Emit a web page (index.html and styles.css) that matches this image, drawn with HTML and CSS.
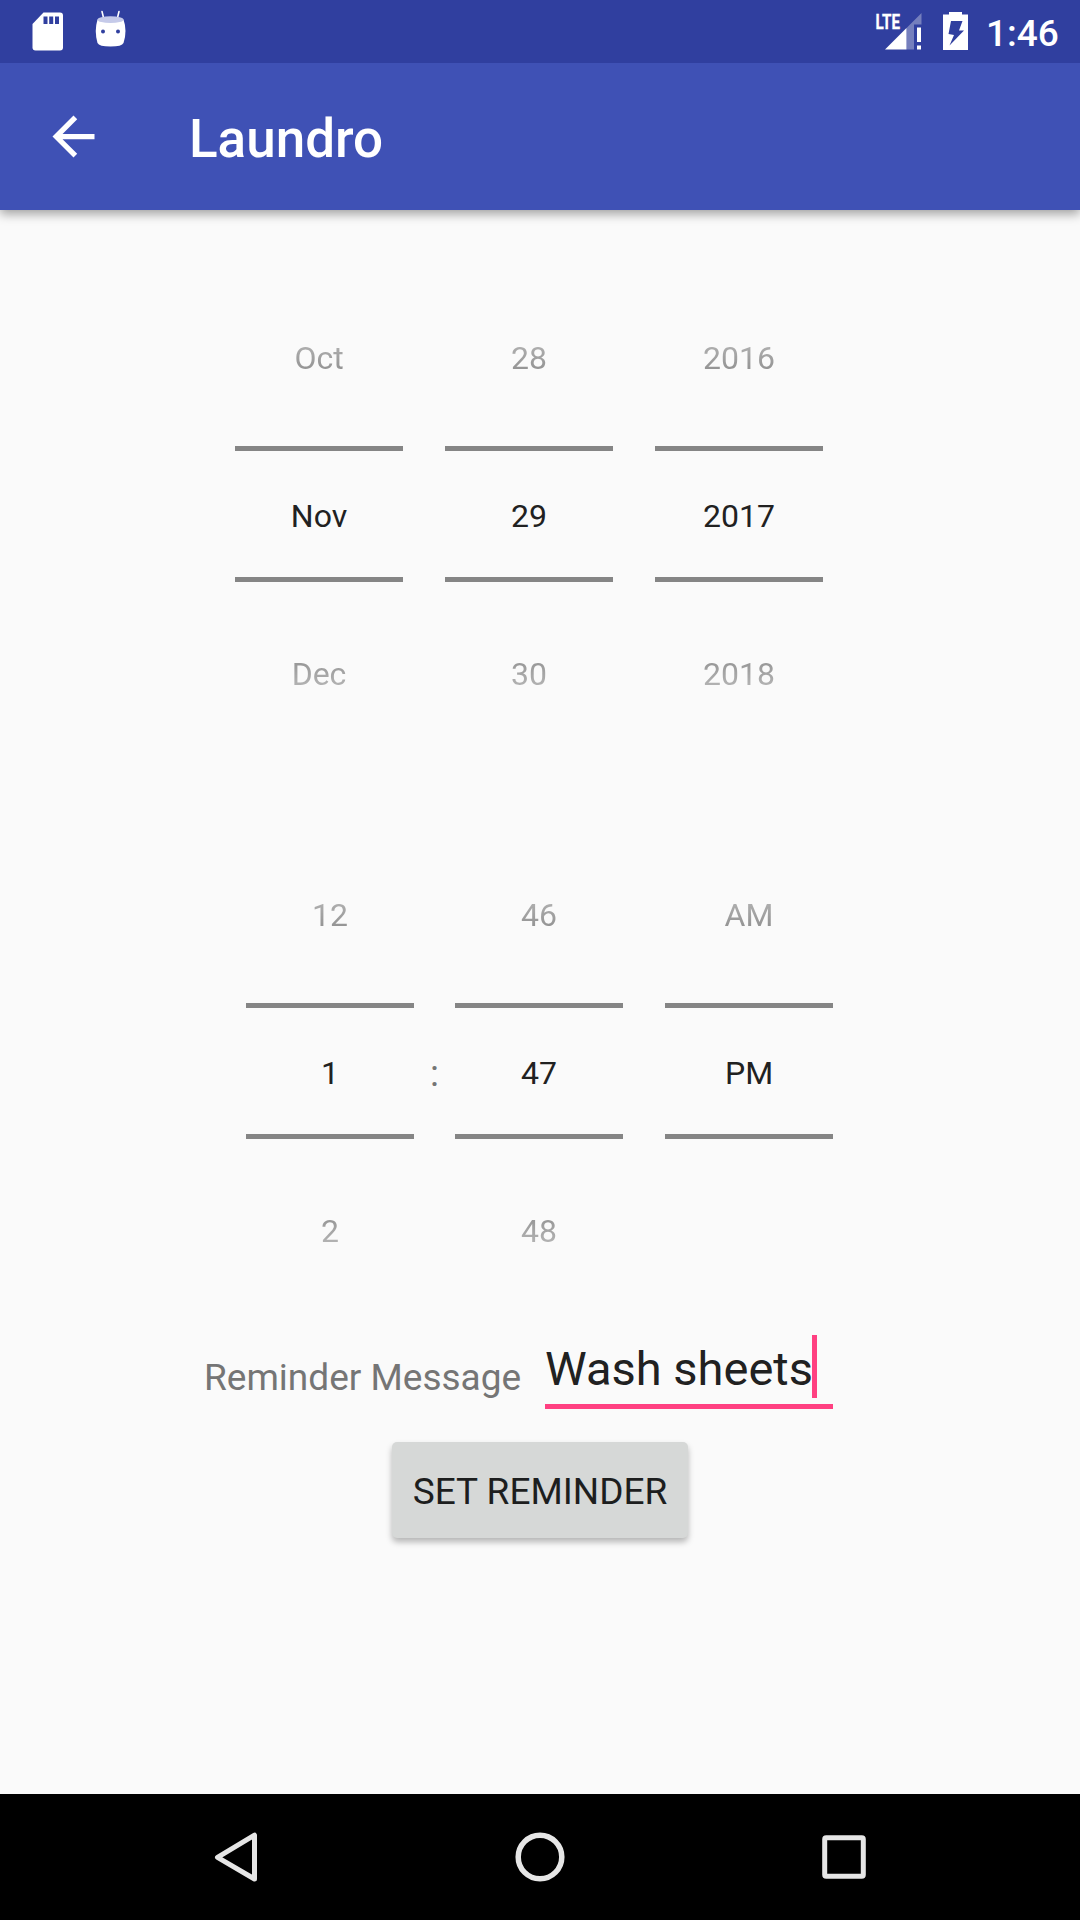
FILE: index.html
```html
<!DOCTYPE html>
<html lang="en">
<head>
<meta charset="utf-8">
<title>Laundro</title>
<link rel="stylesheet" href="styles.css">
</head>
<body>
<div class="screen">
  <div class="status">
    <svg class="status-left" width="140" height="63" viewBox="0 0 140 63">
      <path fill="#fff" d="M43.500 12.500H60Q63 12.500 63 15.500V47.500Q63 50.500 60 50.500H35.500Q32.500 50.500 32.500 47.500V24Z"/>
      <path fill="#303f9f" d="M43.500 16.500h4v7.500h-4zM49.200 16.500h4v7.500h-4zM55 16.500h4v7.500h-4z"/>
      <path d="M102 11.500l1.700 7M119 11.500l-1.700 7" stroke="#fff" stroke-width="1.600" stroke-linecap="round"/>
      <path fill="#fff" d="M97.500 19.500Q94 31 97.500 43Q99 46.500 110.500 46.500T123.500 43Q127.500 31 123.500 19.500Z"/>
      <ellipse cx="110.500" cy="19.700" rx="13" ry="3.400" fill="#c5cae9"/>
      <circle cx="103" cy="31.500" r="2" fill="#303f9f"/>
      <circle cx="118" cy="31.500" r="2" fill="#303f9f"/>
    </svg>
    <div class="status-right">
      <svg width="100" height="63" viewBox="870 0 100 63">
        <path fill="#757fbd" d="M921.500 13V24.500H914V49.500H906.500V28Z"/>
        <path fill="#fff" d="M906.500 28V49.500H885ZM917 27.500h4v14.500h-4zM917 45.500h4v4h-4z"/>
        <text class="lte" x="875.500" y="29" textLength="24.500" lengthAdjust="spacingAndGlyphs">LTE</text>
        <path fill="#fff" d="M943 14.500H949V12H962V14.500H968V50H943Z"/>
        <path fill="#303f9f" d="M951 21H962.500L959 30.500H964L949.500 45.500L954 35L948.500 34Z"/>
      </svg>
      <span class="clock">1:46</span>
    </div>
  </div>
  <div class="appbar">
    <svg width="63" height="63" viewBox="0 0 24 24"><path fill="#fff" d="M20 11H7.830l5.590-5.590L12 4l-8 8 8 8 1.410-1.410L7.830 13H20v-2z"/></svg>
    <h1 class="title">Laundro</h1>
  </div>
  <div class="content">
    <div class="picker date">
      <div class="col"><div class="prev">Oct</div><div class="current">Nov</div><div class="next">Dec</div></div>
      <div class="col"><div class="prev">28</div><div class="current">29</div><div class="next">30</div></div>
      <div class="col"><div class="prev">2016</div><div class="current">2017</div><div class="next">2018</div></div>
    </div>
    <div class="picker time">
      <div class="col"><div class="prev">12</div><div class="current">1</div><div class="next">2</div></div>
      <div class="colon">:</div>
      <div class="col"><div class="prev">46</div><div class="current">47</div><div class="next">48</div></div>
      <div class="col period"><div class="prev">AM</div><div class="current">PM</div><div class="next"></div></div>
    </div>
    <div class="message">
      <span class="label">Reminder Message</span>
      <div class="field"><span class="value">Wash sheets</span><span class="caret"></span></div>
    </div>
    <button class="submit">SET REMINDER</button>
  </div>
  <div class="nav">
    <svg width="1080" height="126" viewBox="0 0 1080 126" fill="none" stroke="#e6e6e6" stroke-linejoin="round">
      <path stroke-width="5" d="M217.500 63.300L254.500 41.200V85Z"/>
      <circle cx="540" cy="63" r="21.800" stroke-width="5.500"/>
      <rect x="824.700" y="43.700" width="38.600" height="38.600" rx="1.500" stroke-width="5"/>
    </svg>
  </div>
</div>
</body>
</html>
```
FILE: styles.css
```css
* { box-sizing: border-box; }
body { margin: 0; font-family: Roboto, sans-serif; }
.screen {
  width: 1080px;
  height: 1920px;
  display: flex;
  flex-direction: column;
  background: #fafafa;
  overflow: hidden;
}
.status {
  position: relative;
  z-index: 1;
  height: 63px;
  flex: none;
  display: flex;
  justify-content: space-between;
  background: #303f9f;
}
.status svg { display: block; }
.status-right { display: flex; width: 210px; }
.lte { font: 700 21px Roboto, sans-serif; fill: #fff; stroke: #fff; stroke-width: .3px; }
.clock {
  margin-left: 16px;
  color: #fff;
  font-size: 37px;
  font-weight: 500;
  line-height: 67px;
}
.appbar {
  height: 147px;
  flex: none;
  display: flex;
  align-items: center;
  padding-left: 42px;
  background: #3f51b5;
  box-shadow: 0 4px 10px rgba(0, 0, 0, .36);
}
.title {
  margin: 5px 0 0 84px;
  color: #fff;
  font-size: 53px;
  font-weight: 500;
  line-height: 62px;
}
.content {
  flex: 1;
  display: flex;
  flex-direction: column;
  align-items: flex-start;
  padding-top: 78px;
}
.picker {
  display: flex;
  font-size: 32px;
  color: #212121;
  text-align: center;
}
.date { gap: 42px; margin-left: 235px; }
.time { margin: 105px 0 0 246px; }
.col {
  width: 168px;
  display: grid;
  grid-template-rows: repeat(3, 136px);
  row-gap: 22px;
  line-height: 141px;
}
.prev { mask-image: linear-gradient(rgba(0, 0, 0, .05), rgba(0, 0, 0, .75)); }
.next { mask-image: linear-gradient(rgba(0, 0, 0, .75), rgba(0, 0, 0, .05)); }
.current {
  border: solid #858585;
  border-width: 5px 0;
  line-height: 131px;
}
.colon {
  width: 41px;
  align-self: center;
  padding-top: 6px;
  color: #757575;
  font-size: 37px;
  line-height: 44px;
}
.period { margin-left: 42px; }
.message {
  display: flex;
  align-items: flex-start;
  margin: 38px 0 0 204px;
}
.label {
  width: 341px;
  padding-top: 21px;
  color: #757575;
  font-size: 37px;
  line-height: 44px;
  white-space: nowrap;
}
.field {
  width: 288px;
  height: 74px;
  display: flex;
  border-bottom: 5px solid #ff4081;
}
.value {
  color: #212121;
  font-size: 47px;
  line-height: 67px;
  white-space: nowrap;
}
.caret { width: 5px; height: 63px; margin-left: -1px; background: #ff4081; }
.submit {
  align-self: center;
  width: 296px;
  height: 96px;
  margin: 33px 0 0;
  padding: 2px 0 0;
  border: 0;
  border-radius: 5px;
  background: #d6d8d7;
  box-shadow: 0 4px 6px rgba(0, 0, 0, .28);
  color: #1d1e1e;
  font: 400 37px Roboto, sans-serif;
  white-space: nowrap;
}
.nav { height: 126px; flex: none; background: #000; }
.nav svg { display: block; }
```
